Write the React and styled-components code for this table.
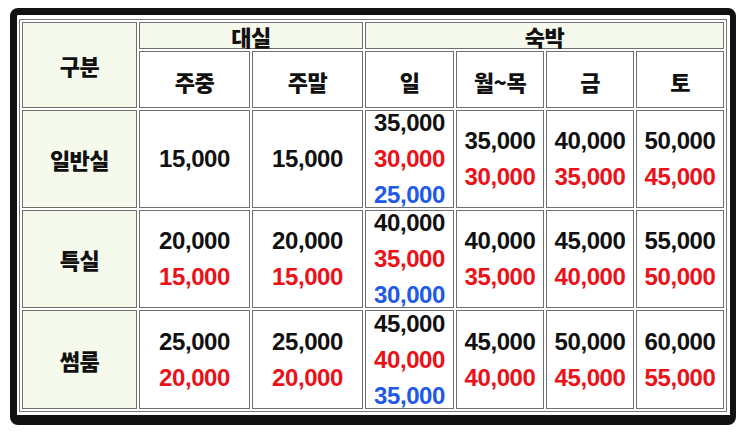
import React from 'react';
import styled, { createGlobalStyle } from 'styled-components';

const GlobalStyle = createGlobalStyle`
    body {
        margin: 0;
        background: #ffffff;
        font-family: "Noto Sans CJK KR", "Liberation Sans", sans-serif;
    }
`;

const Frame = styled.div`
    margin: 8px 0 0 10px;
    width: max-content;
    padding: 4px 3px 3px 2px;
    border: 7px solid #111;
    border-right-width: 6px;
    border-bottom-width: 10px;
    border-radius: 8px;
    background: #fff;
`;

const Table = styled.div`
    display: grid;
    grid-template-columns: 115px 111px 111px 89px 88px 88px 88px;
    grid-template-rows: 27px 57px 98px 98px 99px;
    gap: 2px;
    padding: 2px;
    border: 1px solid #777;
    background: #fff;
`;

const Cell = styled.div`
    box-sizing: border-box;
    border: 1px solid #6f6f6f;
    background: ${props => props.shaded ? '#f6faec' : '#fff'};
    grid-column: ${props => props.col || 'auto'};
    grid-row: ${props => props.row || 'auto'};
    display: flex;
    flex-direction: column;
    align-items: center;
    justify-content: center;
`;

const Label = styled.span`
    font-family: "Noto Sans CJK KR", "Liberation Sans", sans-serif;
    font-weight: 900;
    font-size: 22px;
    line-height: 1;
    color: #111;
    letter-spacing: -0.5px;
    padding-top: ${props => props.low ? '2px' : '0'};
`;

const Price = styled.span`
    font-family: "Liberation Sans", Arial, sans-serif;
    font-weight: 700;
    font-size: 24px;
    line-height: 36px;
    letter-spacing: -0.4px;
    color: ${props => props.tone === 'red' ? '#ec1118' : props.tone === 'blue' ? '#2059e8' : '#111'};
`;

const tones = ['black', 'red', 'blue'];

const rows = [
    {
        name: '일반실',
        cells: [
            ['15,000'],
            ['15,000'],
            ['35,000', '30,000', '25,000'],
            ['35,000', '30,000'],
            ['40,000', '35,000'],
            ['50,000', '45,000'],
        ],
    },
    {
        name: '특실',
        cells: [
            ['20,000', '15,000'],
            ['20,000', '15,000'],
            ['40,000', '35,000', '30,000'],
            ['40,000', '35,000'],
            ['45,000', '40,000'],
            ['55,000', '50,000'],
        ],
    },
    {
        name: '썸룸',
        cells: [
            ['25,000', '20,000'],
            ['25,000', '20,000'],
            ['45,000', '40,000', '35,000'],
            ['45,000', '40,000'],
            ['50,000', '45,000'],
            ['60,000', '55,000'],
        ],
    },
];

const days = ['주중', '주말', '일', '월~목', '금', '토'];

export default function App() {
    return (
        <>
            <GlobalStyle />
            <Frame>
                <Table>
                    <Cell shaded row="1 / span 2"><Label>구분</Label></Cell>
                    <Cell shaded col="2 / span 2"><Label>대실</Label></Cell>
                    <Cell shaded col="4 / span 4"><Label>숙박</Label></Cell>
                    {days.map(day => (
                        <Cell key={day}><Label low>{day}</Label></Cell>
                    ))}
                    {rows.map(r => (
                        <React.Fragment key={r.name}>
                            <Cell shaded><Label>{r.name}</Label></Cell>
                            {r.cells.map((prices, i) => (
                                <Cell key={i}>
                                    {prices.map((p, j) => (
                                        <Price key={j} tone={tones[j]}>{p}</Price>
                                    ))}
                                </Cell>
                            ))}
                        </React.Fragment>
                    ))}
                </Table>
            </Frame>
        </>
    );
}
